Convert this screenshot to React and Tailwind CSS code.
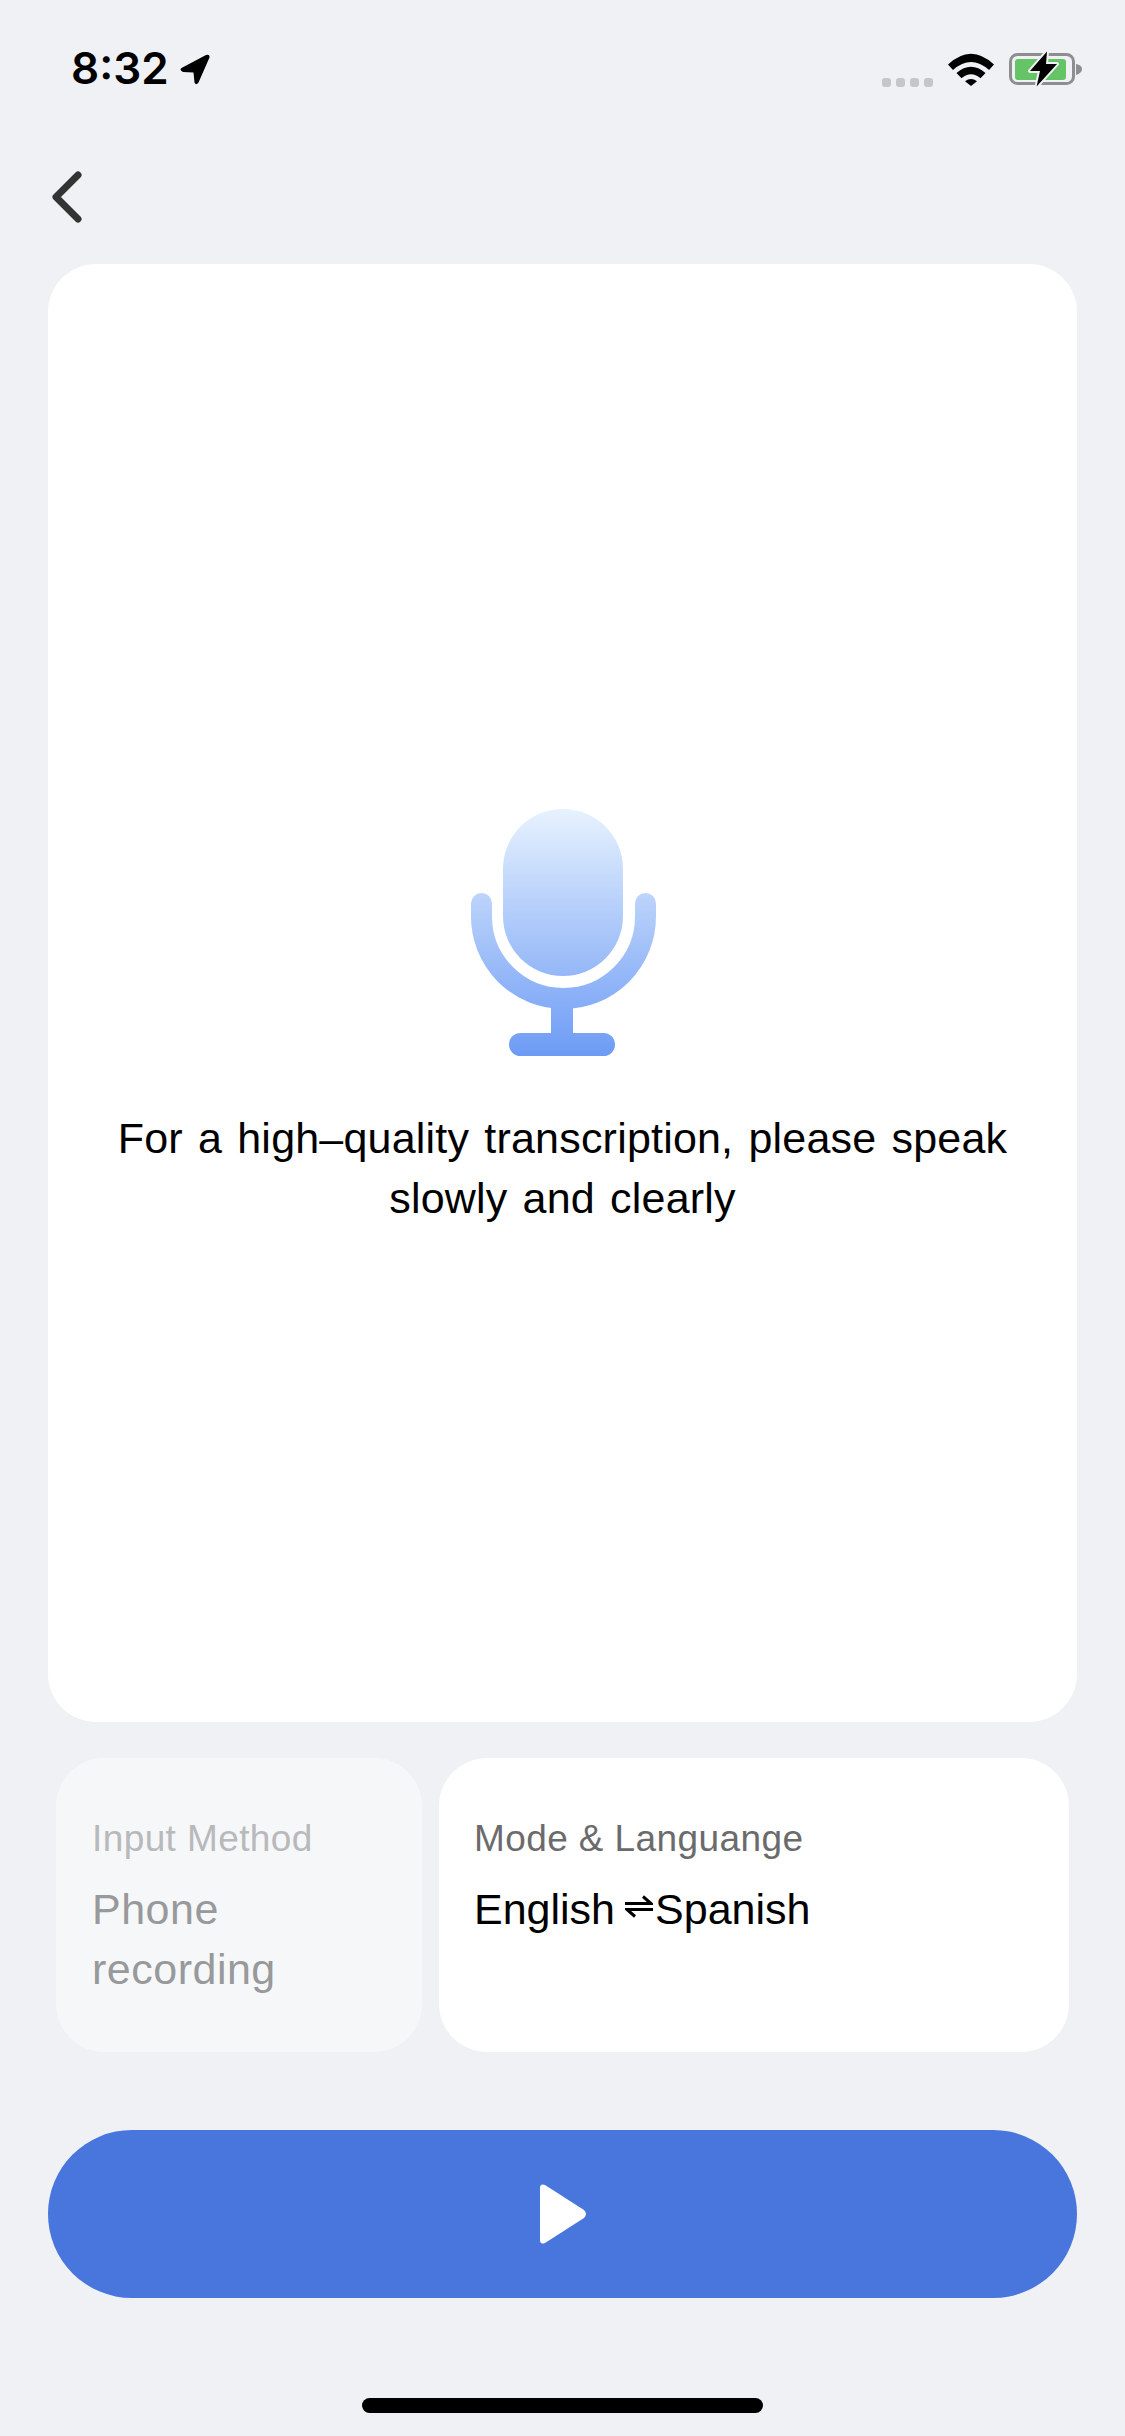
const sans = "font-['Liberation_Sans',Arial,sans-serif]";

function StatusBar() {
  return (
    <div className="h-[138px] shrink-0 pl-[71px] pr-[43px] flex items-center justify-between">
      <div className="flex items-center gap-[11px]">
        <span className="font-['Inter',sans-serif] font-semibold text-[44px] leading-[44px] mb-[3px] text-black">8:32</span>
        <svg width="30" height="31" viewBox="0 0 30 31">
          <path d="M1.500 14 L26 1 Q30 0 29.500 3.500 L18.500 28.500 Q16 32 14.500 28.500 L13.500 18.500 L3 18 Q-1 16 1.500 14 Z" fill="#000" />
        </svg>
      </div>
      <div className="flex items-center">
        <div className="flex gap-[5px] mt-[26px] mr-[15px]">
          <div className="w-[9px] h-[9px] rounded-[3px] bg-[#c6c6c8]" />
          <div className="w-[9px] h-[9px] rounded-[3px] bg-[#c6c6c8]" />
          <div className="w-[9px] h-[9px] rounded-[3px] bg-[#c6c6c8]" />
          <div className="w-[9px] h-[9px] rounded-[3px] bg-[#c6c6c8]" />
        </div>
        <svg width="46" height="33" viewBox="0 0 46 33" className="mr-[15px]">
          <path d="M0 11.500 Q23 -10 46 11.500 L41 17 Q23 1 5 17 Z" fill="#000" />
          <path d="M8.500 20 Q23 7.500 37.500 20 L32.500 25.200 Q23 17.500 13.500 25.200 Z" fill="#000" />
          <path d="M17 28.300 Q23 23.500 29 28.300 L23 33 Z" fill="#000" />
        </svg>
        <svg width="73" height="36" viewBox="0 0 73 36">
          <rect x="1.500" y="3.500" width="63" height="29" rx="7" fill="none" stroke="#8e8e90" strokeWidth="3" />
          <rect x="6" y="8" width="51" height="21" rx="3" fill="#65c466" />
          <path d="M67 13 Q73 14 73 18 Q73 22 67 24 Z" fill="#8e8e90" />
          <path d="M38 0.500 L21 20 L31 20 L27.600 35.500 L48 13 L37 13 Z" fill="#000" stroke="#eff1f5" strokeWidth="4" paintOrder="stroke" strokeLinejoin="round" />
        </svg>
      </div>
    </div>
  );
}

function MicIcon() {
  return (
    <svg width="185" height="247" viewBox="0 0 185 247" className="ml-[2px]">
      <defs>
        <linearGradient id="mic" gradientUnits="userSpaceOnUse" x1="0" y1="0" x2="0" y2="247">
          <stop offset="0" stopColor="#e7f2fe" />
          <stop offset="1" stopColor="#6d9bf5" />
        </linearGradient>
      </defs>
      <rect x="32" y="0" width="120" height="167" rx="60" fill="url(#mic)" />
      <path d="M10.500 94.500 V107.500 A82 82 0 0 0 174.500 107.500 V94.500" fill="none" stroke="url(#mic)" strokeWidth="21" strokeLinecap="round" />
      <rect x="80" y="196" width="22" height="30" fill="url(#mic)" />
      <rect x="38" y="224" width="106" height="23" rx="11.500" fill="url(#mic)" />
    </svg>
  );
}

function SwapArrows() {
  return (
    <svg width="28" height="23" viewBox="0 0 28 23" className="ml-[10px] mr-[2px] mb-[6px]">
      <path d="M0 8.500 H26 L18 1.500" fill="none" stroke="#000" strokeWidth="3" />
      <path d="M28 14.500 H2 L10 21.500" fill="none" stroke="#000" strokeWidth="3" />
    </svg>
  );
}

export default function App() {
  return (
    <div className={`w-[1125px] h-[2436px] bg-[#eff1f5] flex flex-col overflow-hidden ${sans}`}>
      <StatusBar />

      <div className="h-[126px] shrink-0 pl-[49px] pt-[33px]">
        <svg width="34" height="52" viewBox="0 0 34 52">
          <path d="M29 4 L7 26 L29 48" fill="none" stroke="#333333" strokeWidth="7" strokeLinecap="round" strokeLinejoin="round" />
        </svg>
      </div>

      <div className="mx-[48px] h-[1458px] shrink-0 bg-white rounded-[48px] flex flex-col items-center pt-[545px]">
        <MicIcon />
        <p className="mt-[52px] w-[960px] text-center text-[43px] leading-[60px] tracking-[0.2px] [word-spacing:3px] text-black">
          For a high–quality transcription, please speak
          <br />
          slowly and clearly
        </p>
      </div>

      <div className="mx-[56px] mt-[36px] h-[294px] shrink-0 flex gap-[17px]">
        <div className="w-[366px] bg-[#f6f7f9] rounded-[48px] pl-[36px] pt-[56px]">
          <p className="text-[37px] leading-[50px] tracking-[0.4px] text-[#b8b9bb]">Input Method</p>
          <p className="mt-[15px] text-[43px] leading-[60px] tracking-[0.5px] text-[#98999b]">
            Phone
            <br />
            recording
          </p>
        </div>
        <div className="flex-1 bg-white rounded-[48px] pl-[35px] pt-[56px]">
          <p className="text-[37px] leading-[50px] tracking-[0.4px] text-[#6b6b6d]">Mode &amp; Languange</p>
          <div className="mt-[15px] flex items-center text-[43px] leading-[60px] text-black">
            <span>English</span>
            <SwapArrows />
            <span>Spanish</span>
          </div>
        </div>
      </div>

      <div className="mx-[48px] mt-[78px] h-[168px] shrink-0 bg-[#4876dc] rounded-[84px] flex items-center justify-center">
        <svg width="48" height="62" viewBox="0 0 48 62">
          <path d="M1 5 Q1 0 6 2 L45 27 Q49 31 45 35 L6 60 Q1 62 1 57 Z" fill="#fff" />
        </svg>
      </div>

      <div className="mt-[100px] shrink-0 mx-auto w-[401px] h-[15px] rounded-full bg-black" />
    </div>
  );
}
